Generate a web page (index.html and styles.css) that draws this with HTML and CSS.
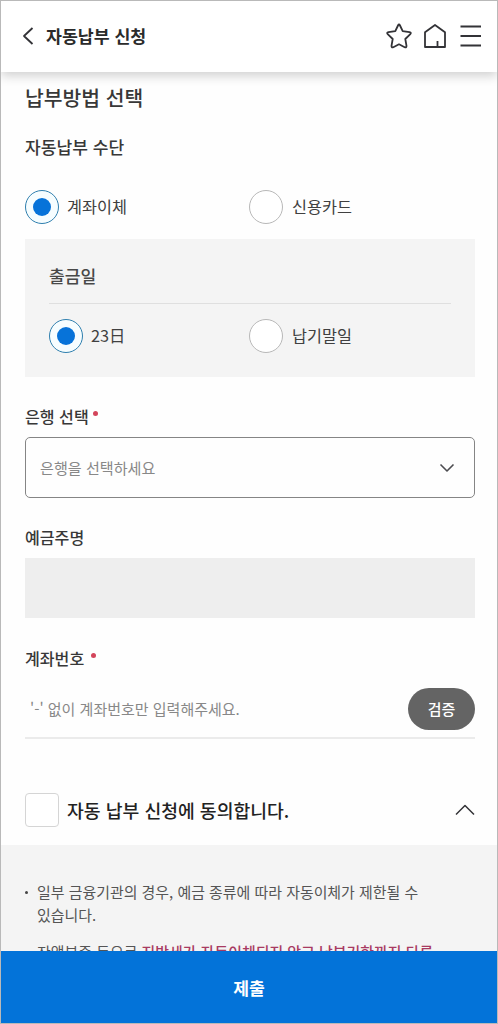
FILE: index.html
```html
<!DOCTYPE html>
<html lang="ko">
<head>
<meta charset="utf-8">
<title>자동납부 신청</title>
<link rel="stylesheet" href="styles.css">
</head>
<body>
<div class="app">
  <header class="topbar">
    <svg class="back" width="12" height="18" viewBox="0 0 12 18"><path d="M10.5 1 2 9l8.500 8"/></svg>
    <h1 class="topbar-title">자동납부 신청</h1>
    <nav class="actions">
      <svg width="28" height="28" viewBox="0 0 28 28"><path d="M13 3.500Q14 1.500 15 3.500L17.700 9.200 24.500 10.100Q26.700 10.700 25.300 12.200L20.300 17 21.500 23.800Q21.600 26 19.700 25.200L14 22.300 8.300 25.200Q6.400 26 6.500 23.800L7.700 17 2.700 12.200Q1.300 10.700 3.500 10.100L10.300 9.200Z"/></svg>
      <svg width="24" height="28" viewBox="0 0 24 28"><path d="M2 25V10.200L12 3l10 7.200V25ZM14.500 25v-6"/></svg>
      <svg class="menu" width="22" height="28" viewBox="0 0 22 28"><path d="M.5 4.500h20.500M.5 14h20.500M.5 23.500h20.500"/></svg>
    </nav>
  </header>
  <main class="content">
    <h2 class="section-title">납부방법 선택</h2>
    <h3 class="sub-title">자동납부 수단</h3>
    <div class="options">
      <label class="option"><span class="radio checked"></span><span class="option-text">계좌이체</span></label>
      <label class="option"><span class="radio"></span><span class="option-text">신용카드</span></label>
    </div>
    <section class="panel">
      <h3 class="panel-title">출금일</h3>
      <div class="options">
        <label class="option"><span class="radio checked"></span><span class="option-text">23日</span></label>
        <label class="option"><span class="radio"></span><span class="option-text">납기말일</span></label>
      </div>
    </section>
    <div class="label">은행 선택<i class="required"></i></div>
    <div class="select"><span class="select-text">은행을 선택하세요</span><svg width="16" height="10" viewBox="0 0 16 10"><path d="m1.500 1.500 6.500 6.500 6.500-6.500"/></svg></div>
    <div class="label label-holder">예금주명</div>
    <div class="readonly"></div>
    <div class="label label-account">계좌번호<i class="required spaced"></i></div>
    <div class="account"><span class="account-hint">'-' 없이 계좌번호만 입력해주세요.</span><button class="verify">검증</button></div>
    <div class="agree"><span class="checkbox"></span><span class="agree-text">자동 납부 신청에 동의합니다.</span><svg width="20" height="12" viewBox="0 0 20 12"><path d="m1 10.500 9-9 9 9"/></svg></div>
  </main>
  <ul class="notes">
    <li>일부 금융기관의 경우, 예금 종류에 따라 자동이체가 제한될 수<br>있습니다.</li>
    <li>잔액부족 등으로 <em>지방세가 자동이체되지 않고 납부기한까지 다른</em></li>
  </ul>
  <button class="submit">제출</button>
</div>
</body>
</html>
```
FILE: styles.css
```css
* { box-sizing: border-box; margin: 0; padding: 0; }
body { font-family: "Noto Sans CJK KR", sans-serif; color: #383838; background: #fff; }
button { font-family: inherit; border: 0; }
svg { fill: none; stroke: #333337; stroke-width: 1.800; stroke-linejoin: round; flex: none; }
.app { display: flex; flex-direction: column; height: 1024px; overflow: hidden; border: 1px solid #b9b9b9; background: #fefefe; }
.topbar { display: flex; align-items: center; flex: none; height: 71px; padding: 0 15px 2px 21px; background: #fff; box-shadow: 0 4px 10px rgba(0,0,0,.18); }
.topbar-title { margin-left: 12px; font-size: 17.300px; line-height: 26px; font-weight: 700; color: #2b2b2b; }
.actions { display: flex; align-items: center; gap: 10px; margin-left: auto; }
.menu { margin-left: 3px; }
.content { flex: none; height: 773px; padding: 11px 22px 0 24px; }
.section-title { font-size: 20.400px; line-height: 28px; font-weight: 500; }
.sub-title { margin-top: 23px; font-size: 17.100px; line-height: 26px; font-weight: 500; }
.options { display: grid; grid-template-columns: 224px 1fr; margin-top: 30px; }
.option { display: flex; align-items: center; gap: 8px; height: 34px; font-size: 16.300px; color: #404040; }
.option + .option { gap: 9px; }
.option-text { padding-bottom: 2px; }
.radio { display: flex; align-items: center; justify-content: center; width: 34px; height: 34px; border: 1px solid #b8b8b8; border-radius: 50%; background: #fff; }
.checked { border-color: #2f7fae; background: #f6fdff; }
.checked::after { content: ""; width: 18px; height: 18px; border-radius: 50%; background: #0773d9; }
.panel { height: 138px; margin-top: 15px; padding: 24px 24px 0; background: #f4f4f4; }
.panel-title { height: 41px; border-bottom: 1px solid #dfdfdf; font-size: 17.100px; line-height: 26px; font-weight: 500; color: #484848; }
.panel .options { grid-template-columns: 200px 1fr; margin-top: 15px; }
.label { display: flex; height: 24px; margin-top: 27px; font-size: 16.100px; line-height: 24px; font-weight: 500; }
.required { width: 5px; height: 5px; margin: 7px 0 0 4px; border-radius: 50%; background: #d3455b; }
.required.spaced { margin-left: 7px; }
.select { display: flex; align-items: center; justify-content: space-between; height: 61px; margin-top: 9px; padding: 0 19px 0 14px; border: 1px solid #858585; border-radius: 5px; font-size: 15.100px; color: #888; }
.select-text { padding-bottom: 2px; }
.select svg { stroke: #4c4c50; stroke-width: 1.600; }
.label-holder { margin-top: 27px; }
.readonly { height: 60px; margin-top: 9px; background: #eee; }
.label-account { margin-top: 28px; }
.account { display: flex; align-items: flex-start; justify-content: space-between; height: 51px; margin-top: 18px; padding-left: 5px; border-bottom: 2px solid #ebebeb; }
.account-hint { font-size: 15px; line-height: 41px; color: #888; }
.verify { width: 67px; height: 42px; padding-bottom: 2px; border-radius: 21px; background: #646464; color: #fff; font-size: 15px; font-weight: 500; }
.agree { display: flex; align-items: center; height: 34px; margin-top: 54px; }
.checkbox { width: 34px; height: 34px; border: 1px solid #d5d5d5; border-radius: 4px; background: #fff; }
.agree-text { margin: 0 auto 0 8px; font-size: 18.250px; font-weight: 500; color: #222; }
.agree svg { stroke-width: 1.500; }
.notes { flex: none; height: 106px; overflow: hidden; padding: 35px 20px 0 23px; list-style: none; background: #f4f4f4; font-size: 14.950px; line-height: 23px; color: #555; }
.notes li { display: block; padding-left: 13px; margin-bottom: 14px; white-space: nowrap; }
.notes li::before { content: ""; float: left; width: 3px; height: 3px; margin: 11px 0 0 -12px; border-radius: 50%; background: #444; }
.notes em { font-style: normal; font-weight: 500; color: #a83a62; }
.submit { flex: none; height: 72px; background: #0373d9; color: #fff; font-size: 17.200px; font-weight: 700; }
```
